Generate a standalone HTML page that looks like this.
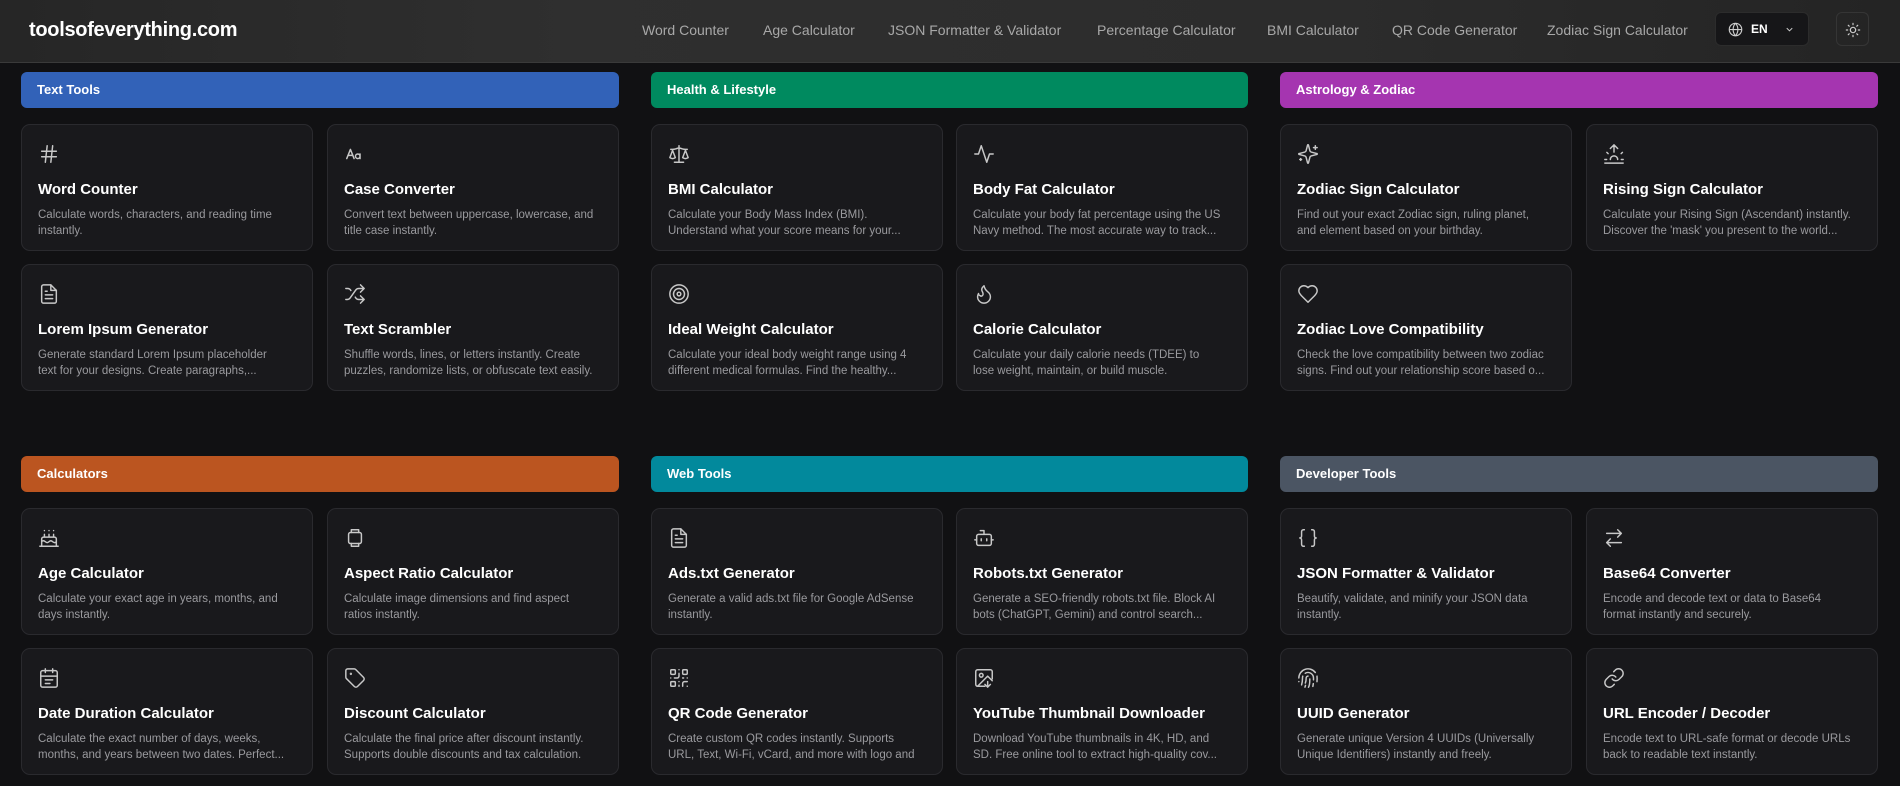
<!DOCTYPE html>
<html><head><meta charset="utf-8">
<style>
*{box-sizing:border-box;margin:0;padding:0}
body{width:1900px;height:786px;overflow:hidden;background:#111113;font-family:"Liberation Sans",sans-serif;color:#fff;position:relative}
.hdr{position:absolute;left:0;top:0;width:1900px;height:63px;background:linear-gradient(90deg,#262626,#2f2f2f 30%,#2c2c2c 70%,#242424);border-bottom:1px solid #3a3a3a}
.logo{position:absolute;left:29px;top:19px;font-size:20px;font-weight:bold;letter-spacing:-0.3px}
.nav{position:absolute;top:22px;font-size:14px;color:#a8a8a8;white-space:nowrap}
.lang{position:absolute;left:1715px;top:12px;width:94px;height:34px;background:#161618;border:1px solid #2c2c2c;border-radius:6px}
.theme{position:absolute;left:1836px;top:12px;width:33px;height:34px;border:1px solid #353535;border-radius:6px}
.sec{position:absolute;height:36px;border-radius:6px;font-size:13px;font-weight:bold;padding-left:16px;line-height:36px}
.card{position:absolute;width:292px;height:127px;background:#19191c;border:1px solid #2a2a2e;border-radius:9px;padding-left:16px}
.card svg{position:absolute;left:16px;top:18px;width:22px;height:22px;fill:none;stroke:#c8c8c8;stroke-width:1.6;stroke-linecap:round;stroke-linejoin:round}
.card h3{position:absolute;left:16px;top:56px;font-size:15px;font-weight:bold;white-space:nowrap}
.card p{position:absolute;left:16px;top:82px;width:250px;font-size:11.5px;line-height:16px;color:#9a9a9e;height:32px;overflow:hidden}
</style></head><body>
<div class="hdr">
<div class="logo">toolsofeverything.com</div>
<div class="nav" style="left:642px">Word Counter</div>
<div class="nav" style="left:763px">Age Calculator</div>
<div class="nav" style="left:888px">JSON Formatter &amp; Validator</div>
<div class="nav" style="left:1097px">Percentage Calculator</div>
<div class="nav" style="left:1267px">BMI Calculator</div>
<div class="nav" style="left:1392px">QR Code Generator</div>
<div class="nav" style="left:1547px">Zodiac Sign Calculator</div>
<div class="lang">
<svg style="position:absolute;left:12px;top:9px" width="15" height="15" viewBox="0 0 24 24" fill="none" stroke="#ccc" stroke-width="1.8"><circle cx="12" cy="12" r="10"/><path d="M2 12h20M12 2a15 15 0 0 1 0 20M12 2a15 15 0 0 0 0 20"/></svg>
<span style="position:absolute;left:35px;top:9px;font-size:12px;font-weight:bold">EN</span>
<svg style="position:absolute;left:68px;top:11px" width="11" height="11" viewBox="0 0 24 24" fill="none" stroke="#ccc" stroke-width="2"><path d="M6 9l6 6 6-6"/></svg>
</div>
<div class="theme"><svg style="position:absolute;left:8px;top:9px" width="16" height="16" viewBox="0 0 24 24" fill="none" stroke="#ccc" stroke-width="1.8" stroke-linecap="round"><circle cx="12" cy="12" r="4"/><path d="M12 2v2M12 20v2M4.9 4.9l1.4 1.4M17.7 17.7l1.4 1.4M2 12h2M20 12h2M6.3 17.7l-1.4 1.4M19.1 4.9l-1.4 1.4"/></svg></div>
</div>

<div class="sec" style="left:21px;top:72px;width:598px;background:#3262b8">Text Tools</div>
<div class="sec" style="left:651px;top:72px;width:597px;background:#008a5f">Health &amp; Lifestyle</div>
<div class="sec" style="left:1280px;top:72px;width:598px;background:#a535b0">Astrology &amp; Zodiac</div>
<div class="sec" style="left:21px;top:456px;width:598px;background:#bb5520">Calculators</div>
<div class="sec" style="left:651px;top:456px;width:597px;background:#02899c">Web Tools</div>
<div class="sec" style="left:1280px;top:456px;width:598px;background:#4b5563">Developer Tools</div>

<div class="card" style="left:21px;top:124px"><svg viewBox="0 0 24 24"><path d="M4 9h16M4 15h16M10 3L8 21M16 3l-2 18"/></svg><h3>Word Counter</h3><p>Calculate words, characters, and reading time instantly.</p></div>
<div class="card" style="left:327px;top:124px"><svg viewBox="0 0 24 24"><path d="M3 17l4-10 4 10M4.5 13.5h5M15 12a2.5 2.5 0 1 1 0 5 2.5 2.5 0 1 1 0-5M17.5 12v5"/></svg><h3>Case Converter</h3><p>Convert text between uppercase, lowercase, and title case instantly.</p></div>
<div class="card" style="left:21px;top:264px"><svg viewBox="0 0 24 24"><path d="M14 2H6a2 2 0 0 0-2 2v16a2 2 0 0 0 2 2h12a2 2 0 0 0 2-2V8z"/><path d="M14 2v6h6M16 13H8M16 17H8M10 9H8"/></svg><h3>Lorem Ipsum Generator</h3><p>Generate standard Lorem Ipsum placeholder text for your designs. Create paragraphs,...</p></div>
<div class="card" style="left:327px;top:264px"><svg viewBox="0 0 24 24"><path d="M2 18h1.4c1.3 0 2.5-.6 3.3-1.7l6.1-8.6c.7-1.1 2-1.7 3.3-1.7H22M18 2l4 4-4 4M2 6h1.9c1.5 0 2.9.9 3.6 2.2M22 18h-5.9c-1.3 0-2.6-.7-3.3-1.8l-.5-.8M18 14l4 4-4 4"/></svg><h3>Text Scrambler</h3><p>Shuffle words, lines, or letters instantly. Create puzzles, randomize lists, or obfuscate text easily.</p></div>

<div class="card" style="left:651px;top:124px"><svg viewBox="0 0 24 24"><path d="M16 16l3-8 3 8c-.9.6-1.9 1-3 1s-2.1-.4-3-1zM2 16l3-8 3 8c-.9.6-1.9 1-3 1s-2.1-.4-3-1zM7 21h10M12 3v18M3 7h2c2 0 5-1 7-2 2 1 5 2 7 2h2"/></svg><h3>BMI Calculator</h3><p>Calculate your Body Mass Index (BMI). Understand what your score means for your...</p></div>
<div class="card" style="left:956px;top:124px"><svg viewBox="0 0 24 24"><path d="M22 12h-4l-3 9L9 3l-3 9H2"/></svg><h3>Body Fat Calculator</h3><p>Calculate your body fat percentage using the US Navy method. The most accurate way to track...</p></div>
<div class="card" style="left:651px;top:264px"><svg viewBox="0 0 24 24"><circle cx="12" cy="12" r="10"/><circle cx="12" cy="12" r="6"/><circle cx="12" cy="12" r="2"/></svg><h3>Ideal Weight Calculator</h3><p>Calculate your ideal body weight range using 4 different medical formulas. Find the healthy...</p></div>
<div class="card" style="left:956px;top:264px"><svg viewBox="0 0 24 24"><path d="M8.5 14.5A2.5 2.5 0 0 0 11 12c0-1.4-.5-2-1-3-1.1-2.1-.2-4.1 2-6 .5 2.5 2 4.9 4 6.5 2 1.6 3 3.5 3 5.5a7 7 0 1 1-14 0c0-1.2.4-2.3 1-3.5a2.5 2.5 0 0 0 2.5 2.5z"/></svg><h3>Calorie Calculator</h3><p>Calculate your daily calorie needs (TDEE) to lose weight, maintain, or build muscle.</p></div>

<div class="card" style="left:1280px;top:124px"><svg viewBox="0 0 24 24"><path d="M9.9 15.5A2 2 0 0 0 8.5 14.1L2.4 12.5a.5.5 0 0 1 0-1L8.5 9.9A2 2 0 0 0 9.9 8.5l1.6-6.1a.5.5 0 0 1 1 0l1.6 6.1a2 2 0 0 0 1.4 1.4l6.1 1.6a.5.5 0 0 1 0 1l-6.1 1.6a2 2 0 0 0-1.4 1.4l-1.6 6.1a.5.5 0 0 1-1 0zM20 3v4M22 5h-4M4 17v2M5 18H3"/></svg><h3>Zodiac Sign Calculator</h3><p>Find out your exact Zodiac sign, ruling planet, and element based on your birthday.</p></div>
<div class="card" style="left:1586px;top:124px"><svg viewBox="0 0 24 24"><path d="M12 2v8M4.2 10.2l1.4 1.4M2 18h2M20 18h2M19.8 11.6l1.4-1.4M22 22H2M8 6l4-4 4 4M16 18a4 4 0 0 0-8 0"/></svg><h3>Rising Sign Calculator</h3><p>Calculate your Rising Sign (Ascendant) instantly. Discover the 'mask' you present to the world...</p></div>
<div class="card" style="left:1280px;top:264px"><svg viewBox="0 0 24 24"><path d="M19 14c1.5-1.5 3-3.2 3-5.5A5.5 5.5 0 0 0 16.5 3c-1.8 0-3 .5-4.5 2-1.5-1.5-2.7-2-4.5-2A5.5 5.5 0 0 0 2 8.5c0 2.3 1.5 4 3 5.5l7 7z"/></svg><h3>Zodiac Love Compatibility</h3><p>Check the love compatibility between two zodiac signs. Find out your relationship score based o...</p></div>

<div class="card" style="left:21px;top:508px"><svg viewBox="0 0 24 24"><path d="M20 21v-8a2 2 0 0 0-2-2H6a2 2 0 0 0-2 2v8M4 16s.5-1 2-1 2.5 2 4 2 2.5-2 4-2 2.5 2 4 2 2-1 2-1M2 21h20M7 8v3M12 8v3M17 8v3M7 4h.01M12 4h.01M17 4h.01"/></svg><h3>Age Calculator</h3><p>Calculate your exact age in years, months, and days instantly.</p></div>
<div class="card" style="left:327px;top:508px"><svg viewBox="0 0 24 24"><rect x="5" y="6" width="14" height="12" rx="2"/><path d="M8 6V3h8v3M8 18v3h8v-3"/></svg><h3>Aspect Ratio Calculator</h3><p>Calculate image dimensions and find aspect ratios instantly.</p></div>
<div class="card" style="left:21px;top:648px"><svg viewBox="0 0 24 24"><rect x="3" y="4" width="18" height="18" rx="2"/><path d="M16 2v4M8 2v4M3 10h18M8 14h8M8 18h5"/></svg><h3>Date Duration Calculator</h3><p>Calculate the exact number of days, weeks, months, and years between two dates. Perfect...</p></div>
<div class="card" style="left:327px;top:648px"><svg viewBox="0 0 24 24"><path d="M12.6 2.6A2 2 0 0 0 11.2 2H4a2 2 0 0 0-2 2v7.2a2 2 0 0 0 .6 1.4l8.7 8.7a2.4 2.4 0 0 0 3.4 0l6.6-6.6a2.4 2.4 0 0 0 0-3.4z"/><circle cx="7.5" cy="7.5" r=".5"/></svg><h3>Discount Calculator</h3><p>Calculate the final price after discount instantly. Supports double discounts and tax calculation.</p></div>

<div class="card" style="left:651px;top:508px"><svg viewBox="0 0 24 24"><path d="M14 2H6a2 2 0 0 0-2 2v16a2 2 0 0 0 2 2h12a2 2 0 0 0 2-2V8z"/><path d="M14 2v6h6M16 13H8M16 17H8M10 9H8"/></svg><h3>Ads.txt Generator</h3><p>Generate a valid ads.txt file for Google AdSense instantly.</p></div>
<div class="card" style="left:956px;top:508px"><svg viewBox="0 0 24 24"><path d="M12 8V4H8"/><rect x="4" y="8" width="16" height="12" rx="2"/><path d="M2 14h2M20 14h2M15 13v2M9 13v2"/></svg><h3>Robots.txt Generator</h3><p>Generate a SEO-friendly robots.txt file. Block AI bots (ChatGPT, Gemini) and control search...</p></div>
<div class="card" style="left:651px;top:648px"><svg viewBox="0 0 24 24"><rect x="3" y="3" width="5" height="5" rx="1"/><rect x="16" y="3" width="5" height="5" rx="1"/><rect x="3" y="16" width="5" height="5" rx="1"/><path d="M21 16h-3a2 2 0 0 0-2 2v3M21 21v.01M12 7v3a2 2 0 0 1-2 2H7M3 12h.01M12 3h.01M12 16v.01M16 12h1M21 12v.01M12 21v-1"/></svg><h3>QR Code Generator</h3><p>Create custom QR codes instantly. Supports URL, Text, Wi-Fi, vCard, and more with logo and colo...</p></div>
<div class="card" style="left:956px;top:648px"><svg viewBox="0 0 24 24"><path d="M21 13V5a2 2 0 0 0-2-2H5a2 2 0 0 0-2 2v14a2 2 0 0 0 2 2h8M21 15l-5-5L5 21M16 16v6M13 19l3 3 3-3"/><circle cx="9" cy="9" r="2"/></svg><h3>YouTube Thumbnail Downloader</h3><p>Download YouTube thumbnails in 4K, HD, and SD. Free online tool to extract high-quality cov...</p></div>

<div class="card" style="left:1280px;top:508px"><svg viewBox="0 0 24 24"><path d="M8 3H7a2 2 0 0 0-2 2v5a2 2 0 0 1-2 2 2 2 0 0 1 2 2v5a2 2 0 0 0 2 2h1M16 21h1a2 2 0 0 0 2-2v-5a2 2 0 0 1 2-2 2 2 0 0 1-2-2V5a2 2 0 0 0-2-2h-1"/></svg><h3>JSON Formatter &amp; Validator</h3><p>Beautify, validate, and minify your JSON data instantly.</p></div>
<div class="card" style="left:1586px;top:508px"><svg viewBox="0 0 24 24"><path d="M16 3l4 4-4 4M20 7H4M8 21l-4-4 4-4M4 17h16"/></svg><h3>Base64 Converter</h3><p>Encode and decode text or data to Base64 format instantly and securely.</p></div>
<div class="card" style="left:1280px;top:648px"><svg viewBox="0 0 24 24"><path d="M12 10a2 2 0 0 0-2 2c0 1 0 3.4-.9 5.5M14 13.1c0 2.5 0 6.9-1.5 9M17.3 21.1c.1-.6.4-2.1.5-3M2 12a10 10 0 0 1 18-6M2 16h.01M21.8 16c.2-2 .1-5.3 0-6M5 19.5C5.5 18 6 15 6 12a6 6 0 0 1 .3-2M8.7 22c.2-.7.4-1.3.6-2M9 6.8a6 6 0 0 1 9 5.2v2"/></svg><h3>UUID Generator</h3><p>Generate unique Version 4 UUIDs (Universally Unique Identifiers) instantly and freely.</p></div>
<div class="card" style="left:1586px;top:648px"><svg viewBox="0 0 24 24"><path d="M10 13a5 5 0 0 0 7.5.5l3-3a5 5 0 0 0-7.1-7.1l-1.7 1.7M14 11a5 5 0 0 0-7.5-.5l-3 3a5 5 0 0 0 7.1 7.1l1.7-1.7"/></svg><h3>URL Encoder / Decoder</h3><p>Encode text to URL-safe format or decode URLs back to readable text instantly.</p></div>
</body></html>
